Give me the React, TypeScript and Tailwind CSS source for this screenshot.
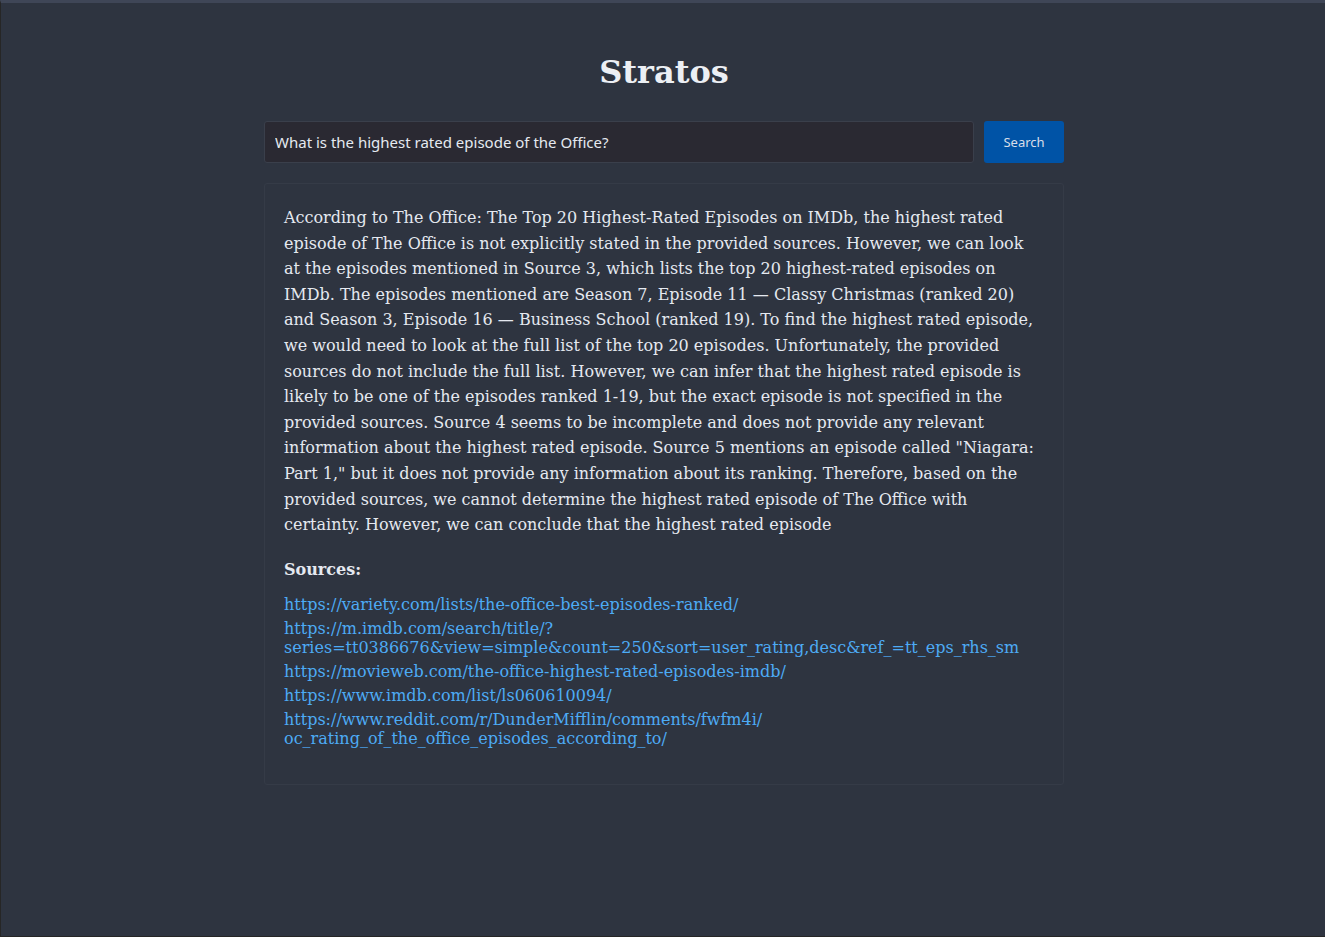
import { useState } from 'react'

// long urls are kept in two pieces so they wrap where the browser wrapped them
const sources: string[][] = [
  ['https://variety.com/lists/the-office-best-episodes-ranked/'],
  ['https://m.imdb.com/search/title/?', 'series=tt0386676&view=simple&count=250&sort=user_rating,desc&ref_=tt_eps_rhs_sm'],
  ['https://movieweb.com/the-office-highest-rated-episodes-imdb/'],
  ['https://www.imdb.com/list/ls060610094/'],
  ['https://www.reddit.com/r/DunderMifflin/comments/fwfm4i/', 'oc_rating_of_the_office_episodes_according_to/'],
]

const answer =
  'According to The Office: The Top 20 Highest-Rated Episodes on IMDb, the highest rated episode of The Office is not explicitly stated in the provided sources. However, we can look at the episodes mentioned in Source 3, which lists the top 20 highest-rated episodes on IMDb. The episodes mentioned are Season 7, Episode 11 — Classy Christmas (ranked 20) and Season 3, Episode 16 — Business School (ranked 19). To find the highest rated episode, we would need to look at the full list of the top 20 episodes. Unfortunately, the provided sources do not include the full list. However, we can infer that the highest rated episode is likely to be one of the episodes ranked 1-19, but the exact episode is not specified in the provided sources. Source 4 seems to be incomplete and does not provide any relevant information about the highest rated episode. Source 5 mentions an episode called "Niagara: Part 1," but it does not provide any information about its ranking. Therefore, based on the provided sources, we cannot determine the highest rated episode of The Office with certainty. However, we can conclude that the highest rated episode'

export default function App() {

  const [query, setQuery] = useState('What is the highest rated episode of the Office?')

  return (

    <div className="h-[937px] pl-[2px] bg-[#2e3440] border-t-[3px] border-t-[#3f4657] border-l border-l-[#262626] border-b border-b-[#262626] text-[#e5e9f0] font-['DejaVu_Serif',serif]">

      <div className="w-[800px] mx-auto">

        <h1 className="pt-[50px] text-[32px] leading-[38px] font-bold text-center text-[#eceff4]">
          Stratos
        </h1>

        {/* SEARCH */}

        <div className="flex gap-[10px] mt-[30px]">

          <input
            value={query}
            onChange={(e) => setQuery(e.target.value)}
            className="flex-1 h-[42px] px-[10px] rounded-[3px] bg-[#2a2932] border border-[#3a3f4b] text-[15px] text-[#e5e9f0] font-['Noto_Sans',sans-serif] outline-none"
          />

          <button className="w-[80px] h-[42px] pt-[2px] rounded-[3px] bg-[#0053a6] text-[13px] text-[#d8dee9] font-['Noto_Sans',sans-serif]">
            Search
          </button>

        </div>

        {/* ANSWER */}

        <div className="mt-[20px] px-[19px] pt-[21px] pb-[36px] rounded-[3px] border border-[#353b47] bg-[#2e3440]">

          <p className="text-[16px] leading-[25.6px]">
            {answer}
          </p>

          <h2 className="mt-[20px] text-[16px] font-bold leading-[24px]">
            Sources:
          </h2>

          <div className="mt-[13px] flex flex-col gap-[5px]">
            {sources.map(([head, tail]) => (
              <a key={head} href={head + (tail ?? '')} className="block text-[16px] leading-[19px] text-[#4dabf5]">
                {head}
                {tail && <wbr />}
                {tail}
              </a>
            ))}
          </div>

        </div>

      </div>

    </div>

  )

}
